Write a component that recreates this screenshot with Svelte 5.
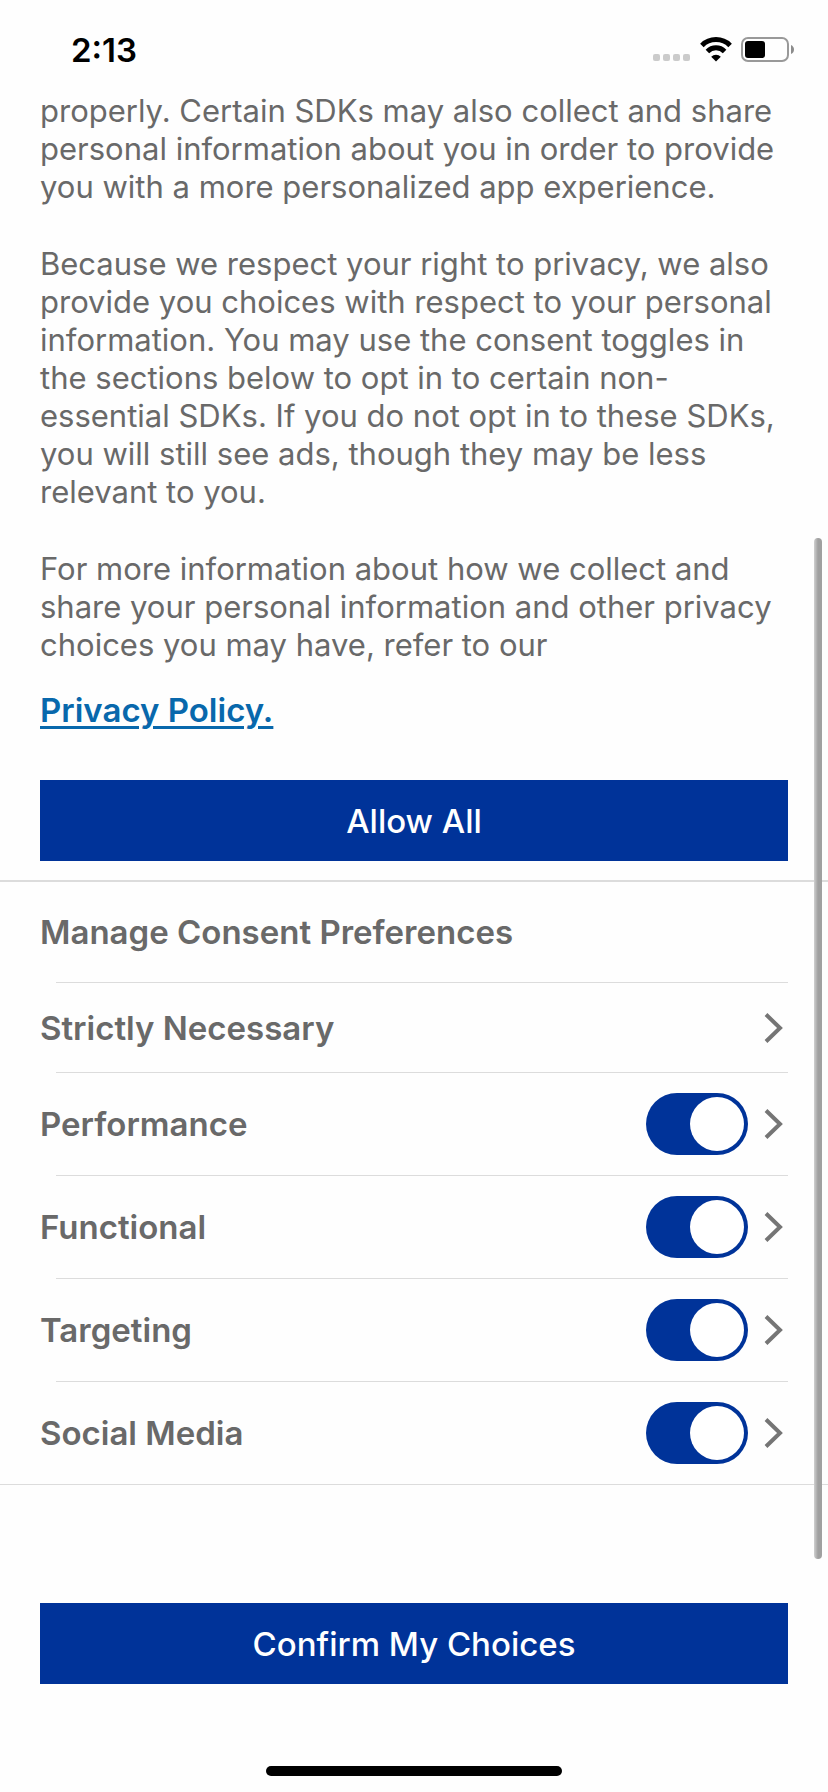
<script>
    let categories = $state([
        { id: "necessary", name: "Strictly Necessary", optional: false },
        { id: "performance", name: "Performance", optional: true, allowed: true },
        { id: "functional", name: "Functional", optional: true, allowed: true },
        { id: "targeting", name: "Targeting", optional: true, allowed: true },
        { id: "social", name: "Social Media", optional: true, allowed: true },
    ]);

    function allowAll() {
        categories.forEach((category) => {
            if (category.optional) category.allowed = true;
        });
    }
</script>


<div class="screen">
    <header class="status">
        <span class="time">2:13</span>
        <div class="indicators">
            <svg width="38" height="26" viewBox="0 0 38 26" aria-hidden="true">
                <g fill="#cbcbcb">
                    <rect x="0" y="17" width="7" height="7" rx="2" />
                    <rect x="10" y="17" width="7" height="7" rx="2" />
                    <rect x="20" y="17" width="7" height="7" rx="2" />
                    <rect x="30" y="17" width="7" height="7" rx="2" />
                </g>
            </svg>
            <svg width="32" height="26" viewBox="0 0 32 26" aria-hidden="true">
                <g fill="none" stroke="#000" stroke-width="5">
                    <path d="M1.9 8.4 A20 20 0 0 1 30.1 8.4" />
                    <path d="M7.4 14.4 A12.2 12.2 0 0 1 24.6 14.4" />
                </g>
                <path d="M16 24.500 L11.2 19.800 A6.6 6.6 0 0 1 20.8 19.800 Z" fill="#000" />
            </svg>
            <svg width="54" height="26" viewBox="0 0 54 26" aria-hidden="true">
                <rect x="1" y="1" width="46" height="23" rx="6" fill="none" stroke="#999" stroke-width="2" />
                <rect x="4" y="4" width="20" height="17" rx="3" fill="#000" />
                <path d="M50 8 Q53 9.500 53 12.500 Q53 15.500 50 17 Z" fill="#8c8c8c" />
            </svg>
        </div>
    </header>

    <main>
        <section class="intro">
            <p>properly. Certain SDKs may also collect and share personal information about you in order to provide you with a more personalized app experience.</p>
            <p>Because we respect your right to privacy, we also provide you choices with respect to your personal information. You may use the consent toggles in the sections below to opt in to certain non-essential SDKs. If you do not opt in to these SDKs, you will still see ads, though they may be less relevant to you.</p>
            <p>For more information about how we collect and share your personal information and other privacy choices you may have, refer to our</p>
            <a href="#privacy">Privacy Policy.</a>
            <button class="action" onclick={allowAll}>Allow All</button>
        </section>

        <section class="preferences">
            <h2>Manage Consent Preferences</h2>
            <ul>
                {#each categories as category}
                    <li>
                        <div class="row" class:tall={category.optional}>
                            {#if category.optional}
                                <label for={category.id}>{category.name}</label>
                                <input id={category.id} type="checkbox" role="switch" bind:checked={category.allowed} />
                            {:else}
                                <span class="name">{category.name}</span>
                            {/if}
                            <button class="more" aria-label="{category.name} details">
                                <svg width="20" height="30" viewBox="0 0 20 30" aria-hidden="true">
                                    <path d="M2 1.500 L16 15 L2 28.500" fill="none" stroke="#757575" stroke-width="4" />
                                </svg>
                            </button>
                        </div>
                    </li>
                {/each}
            </ul>
        </section>
    </main>

    <footer>
        <button class="action">Confirm My Choices</button>
        <div class="home"></div>
    </footer>

    <div class="scrollbar"></div>
</div>


<style>
    :global(body){
        background: #fefefe;
    }

    .screen{
        position: relative;
        display: flex;
        flex-direction: column;
        min-height: 100vh;
        box-sizing: border-box;
        color: #696969;
        font-family: Inter, "Liberation Sans", sans-serif;
    }

    .status{
        display: flex;
        justify-content: space-between;
        align-items: center;
        height: 92px;
        padding: 7px 33px 0 71px;
        box-sizing: border-box;
        color: #000;
    }

    .time{
        font-size: 33px;
        font-weight: 600;
    }

    .indicators{
        display: flex;
        gap: 9px;
    }

    .intro{
        display: flex;
        flex-direction: column;
        padding: 0 40px 19px;
        border-bottom: 2px solid #dcdcdc;
    }

    .intro p{
        margin: 0 0 39px;
        font-size: 31px;
        line-height: 38px;
    }

    .intro a{
        align-self: flex-start;
        margin: -13px 0 50px;
        color: #0868ac;
        font-size: 33px;
        font-weight: 600;
        line-height: 40px;
        text-underline-offset: 4px;
        text-decoration-thickness: 3px;
    }

    .action{
        width: 100%;
        height: 81px;
        border: 0;
        background: #003399;
        color: #fff;
        font-family: inherit;
        font-size: 33px;
        font-weight: 500;
    }

    .preferences{
        border-bottom: 1px solid #dcdcdc;
    }

    h2{
        margin: 0;
        padding: 0 40px;
        font-size: 33px;
        font-weight: 600;
        line-height: 100px;
    }

    ul{
        margin: 0;
        padding: 0;
        list-style: none;
    }

    /* divider starts further in than the text */
    li::before{
        content: "";
        display: block;
        height: 1px;
        margin: 0 40px 0 56px;
        background: #dcdcdc;
    }

    .row{
        display: flex;
        align-items: center;
        gap: 16px;
        height: 89px;
        padding: 0 44px 0 40px;
    }

    .row.tall{
        height: 102px;
    }

    .name, label{
        flex: 1;
        font-size: 33px;
        font-weight: 600;
    }

    input{
        appearance: none;
        width: 102px;
        height: 62px;
        margin: 0;
        padding: 4px;
        box-sizing: border-box;
        border-radius: 31px;
        background: #c4c4c4;
    }

    input::before{
        content: "";
        display: block;
        width: 54px;
        height: 54px;
        border-radius: 50%;
        background: #fff;
    }

    input:checked{
        background: #003399;
    }

    input:checked::before{
        margin-left: auto;
    }

    .more{
        display: flex;
        padding: 0;
        border: 0;
        background: none;
    }

    footer{
        display: flex;
        flex-direction: column;
        align-items: center;
        gap: 82px;
        margin-top: auto;
        padding: 0 40px 16px;
    }

    .home{
        width: 296px;
        height: 10px;
        border-radius: 5px;
        background: #000;
    }

    .scrollbar{
        position: absolute;
        top: 30%;
        right: 6px;
        bottom: 13%;
        width: 8px;
        border-radius: 4px;
        background: linear-gradient(to right, #d0d0d0, #a0a0a0 50%);
    }
</style>
